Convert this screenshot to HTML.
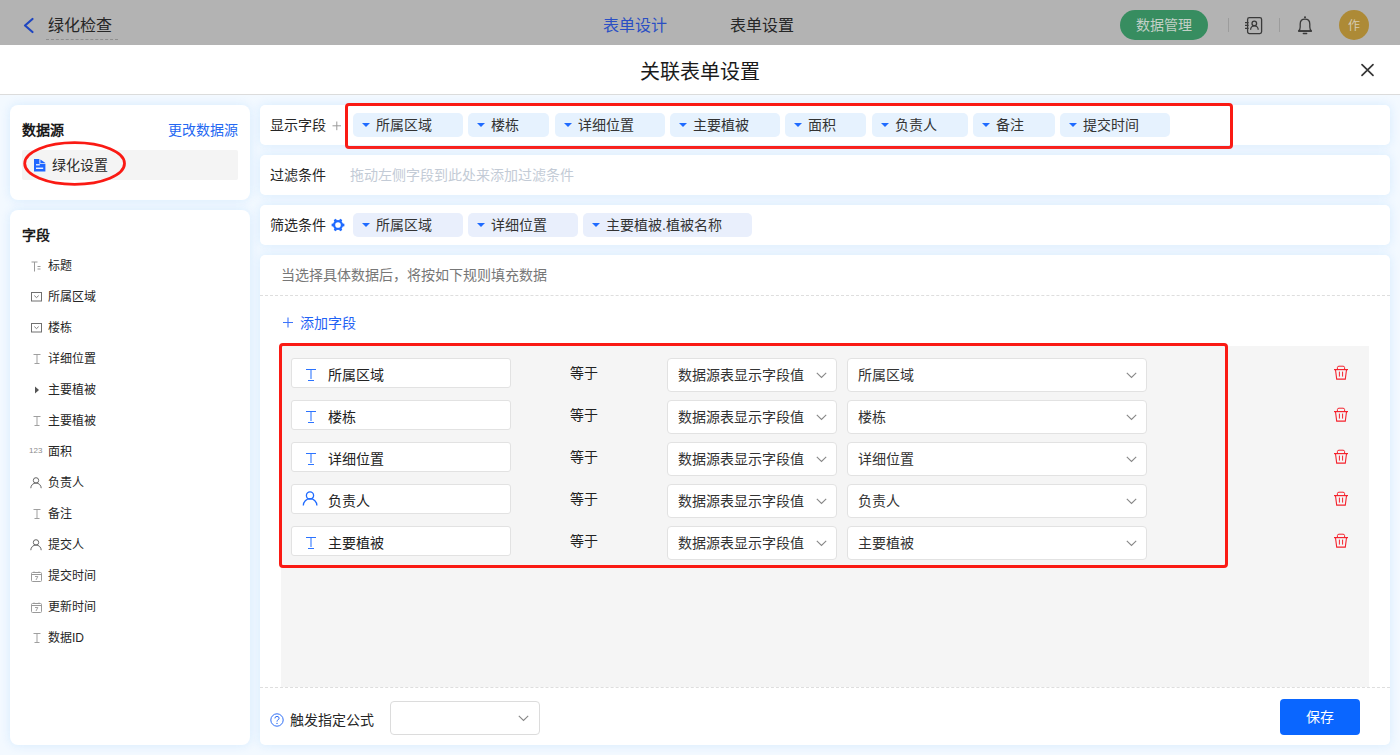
<!DOCTYPE html>
<html lang="zh-CN"><head><meta charset="utf-8">
<style>
*{box-sizing:border-box;margin:0;padding:0}
body{text-spacing-trim:space-all;}
html,body{width:1400px;height:755px;overflow:hidden;background:#f3f9ff;font-family:"Liberation Sans",sans-serif;color:#222;font-size:14px}
.abs{position:absolute}
#hdr{position:absolute;left:0;top:0;width:1400px;height:45px;background:#b3b3b3}
#mt{position:absolute;left:0;top:45px;width:1400px;height:50px;background:#fff;border-bottom:1px solid #dcdcdc}
.card{position:absolute;background:#fff;box-shadow:0 0 9px 1px rgba(210,233,253,.75)}
.lp{border-radius:8px}
.rc{border-radius:5px}
.t{position:absolute;white-space:nowrap;line-height:1}
.tag{position:absolute;height:24px;top:8px;background:#e6f2fe;border-radius:5px}
.tag i{position:absolute;left:9px;top:10px;width:0;height:0;border-left:4px solid transparent;border-right:4px solid transparent;border-top:4px solid #1f6bff}
.tag span{position:absolute;left:23px;top:5px;line-height:14px;font-size:14px;color:#333;white-space:nowrap}
.tag2{background:#e9effc}
.fi{position:absolute;left:22px;font-size:12px;color:#333;line-height:12px}
.fi b{position:absolute;left:9px;top:0;font-weight:normal}
.inp{position:absolute;left:291px;width:220px;height:30px;background:#fff;border:1px solid #e2e2e2;border-radius:3px}
.sel1{position:absolute;left:667px;width:170px;height:34px;background:#fff;border:1px solid #e2e2e2;border-radius:4px}
.sel2{position:absolute;left:847px;width:300px;height:34px;background:#fff;border:1px solid #e2e2e2;border-radius:4px}
.fl{left:48px;font-size:12px;color:#262626}
.rt{font-size:14px;color:#222}
.st{position:absolute;left:10px;top:9px;font-size:14px;line-height:14px;color:#333;white-space:nowrap}
.chev{position:absolute;right:9px;top:13px}
.eq{position:absolute;left:570px;font-size:14px;line-height:14px;color:#222}
</style></head><body>
<!-- header -->
<div id="hdr">
  <svg class="abs" style="left:22px;top:17px" width="13" height="17" viewBox="0 0 13 17"><path d="M10.5 2 L3 8.5 L10.5 15" fill="none" stroke="#1f46c0" stroke-width="2.2" stroke-linecap="round" stroke-linejoin="round"/></svg>
  <div class="t" style="left:48px;top:18px;font-size:16px;color:#262626">绿化检查</div>
  <div class="abs" style="left:46px;top:39px;width:72px;border-top:1px dashed #8f8f8f"></div>
  <div class="t" style="left:603px;top:18px;font-size:16px;color:#2a4fc4">表单设计</div>
  <div class="t" style="left:730px;top:18px;font-size:16px;color:#262626">表单设置</div>
  <div class="abs" style="left:1120px;top:10px;width:88px;height:30px;border-radius:15px;background:#378d60"></div>
  <div class="t" style="left:1136px;top:18px;font-size:14px;color:#c3d0c7">数据管理</div>
  <div class="abs" style="left:1228px;top:18px;width:1px;height:14px;background:#9c9c9c"></div>
  <div class="abs" style="left:1279px;top:18px;width:1px;height:14px;background:#9c9c9c"></div>
  <svg class="abs" style="left:1243px;top:15px" width="22" height="21" viewBox="0 0 22 21"><rect x="4.6" y="2.6" width="14" height="16" rx="1.8" fill="none" stroke="#3a3a3a" stroke-width="1.3"/><path d="M2 7.6 H5.6 M2 10.4 H5.6 M2 13.3 H5.6" stroke="#3a3a3a" stroke-width="1.2"/><circle cx="11.3" cy="8.4" r="2.3" fill="none" stroke="#3a3a3a" stroke-width="1.3"/><path d="M7.6 14.7 A3.8 3.8 0 0 1 15.2 14.7" fill="none" stroke="#3a3a3a" stroke-width="1.3"/></svg>
  <svg class="abs" style="left:1296px;top:15px" width="18" height="20" viewBox="0 0 18 20"><circle cx="9" cy="2.2" r="1" fill="#3a3a3a"/><path d="M2.6 16 Q4.2 14.6 4.2 12 V9 Q4.2 4.1 9 4.1 Q13.8 4.1 13.8 9 V12 Q13.8 14.6 15.4 16 Z" fill="none" stroke="#3a3a3a" stroke-width="1.3" stroke-linejoin="round"/><path d="M2.4 16.1 H15.6" stroke="#3a3a3a" stroke-width="1.5"/><path d="M7.3 18.5 H10.7" stroke="#3a3a3a" stroke-width="1.3" stroke-linecap="round"/></svg>
  <div class="abs" style="left:1339px;top:10px;width:30px;height:30px;border-radius:15px;background:#ad8a36"></div>
  <div class="t" style="left:1348px;top:20px;font-size:12px;color:#d6ccb2">作</div>
</div>
<!-- modal title -->
<div id="mt">
  <div class="t" style="left:640px;top:17px;font-size:20px;color:#1a1a1a">关联表单设置</div>
  <svg class="abs" style="left:1360px;top:18px" width="15" height="14" viewBox="0 0 15 14"><path d="M2 1.6 L13 12.4 M13 1.6 L2 12.4" stroke="#363636" stroke-width="1.7" stroke-linecap="round"/></svg>
</div>

<!-- left panel 1 -->
<div class="card lp" style="left:10px;top:105px;width:240px;height:95px">
  <div class="t" style="left:12px;top:18px;font-size:14px;font-weight:bold;color:#1a1a1a">数据源</div>
  <div class="t" style="left:158px;top:18px;font-size:14px;color:#2468f2">更改数据源</div>
  <div class="abs" style="left:12px;top:45px;width:216px;height:30px;background:#f4f4f4;border-radius:2px"></div>
  <svg class="abs" style="left:23.5px;top:53.5px" width="12" height="13" viewBox="0 0 12 13"><path d="M0 0 H5.4 V4.7 H11.4 V12.6 H0 Z" fill="#1f66ff"/><path d="M6.4 0.5 L11.4 3.9 H6.4 Z" fill="#1f66ff"/><rect x="2" y="5.2" width="3.8" height="1.2" fill="#fff"/><rect x="2" y="8.6" width="7.2" height="1.3" fill="#fff"/></svg>
  <div class="t" style="left:42px;top:53px;font-size:14px;color:#2b2b2b">绿化设置</div>
</div>
<svg class="abs" style="left:20px;top:138px" width="110" height="50" viewBox="0 0 110 50"><ellipse cx="54.6" cy="25.5" rx="49.9" ry="20.8" fill="none" stroke="#fa1a14" stroke-width="2.8"/></svg>

<!-- left panel 2 -->
<div class="card lp" style="left:10px;top:210px;width:240px;height:535px">
  <div class="t" style="left:12px;top:18px;font-size:14px;font-weight:bold;color:#1a1a1a">字段</div>
</div>
<svg class="abs" style="left:31px;top:261px" width="11" height="11" viewBox="0 0 11 11"><path d="M0.5 1 H6.5 M3.5 1 V10.5 M6.5 5.5 H9.5 M6.5 8 H9.5" stroke="#9a9a9a" stroke-width="1" fill="none"/></svg>
<div class="t fl" style="top:260px">标题</div>
<svg class="abs" style="left:31px;top:292px" width="11" height="10" viewBox="0 0 11 10"><rect x="0.5" y="0.5" width="10" height="8.5" fill="none" stroke="#707070" stroke-width="1"/><path d="M3.3 3.6 L5.5 5.6 L7.7 3.6" fill="none" stroke="#707070" stroke-width="0.9"/></svg>
<div class="t fl" style="top:291px">所属区域</div>
<svg class="abs" style="left:31px;top:323px" width="11" height="10" viewBox="0 0 11 10"><rect x="0.5" y="0.5" width="10" height="8.5" fill="none" stroke="#707070" stroke-width="1"/><path d="M3.3 3.6 L5.5 5.6 L7.7 3.6" fill="none" stroke="#707070" stroke-width="0.9"/></svg>
<div class="t fl" style="top:322px">楼栋</div>
<svg class="abs" style="left:33px;top:354px" width="8" height="10" viewBox="0 0 8 10"><path d="M0.5 0.5 H7.5 M4 0.5 V9.5 M1.5 9.5 H6.5" stroke="#9b9b9b" stroke-width="0.95" fill="none"/></svg>
<div class="t fl" style="top:353px">详细位置</div>
<svg class="abs" style="left:34px;top:386px" width="6" height="8" viewBox="0 0 6 8"><path d="M1 0.5 L5 4 L1 7.5 Z" fill="#555"/></svg>
<div class="t fl" style="top:384px">主要植被</div>
<svg class="abs" style="left:33px;top:416px" width="8" height="10" viewBox="0 0 8 10"><path d="M0.5 0.5 H7.5 M4 0.5 V9.5 M1.5 9.5 H6.5" stroke="#9b9b9b" stroke-width="0.95" fill="none"/></svg>
<div class="t fl" style="top:415px">主要植被</div>
<div class="t" style="left:29px;top:447px;font-size:8px;color:#8c8c8c;letter-spacing:0">123</div>
<div class="t fl" style="top:446px">面积</div>
<svg class="abs" style="left:30px;top:477px" width="12" height="12" viewBox="0 0 12 12"><circle cx="6" cy="3.4" r="2.7" fill="none" stroke="#666" stroke-width="1"/><path d="M0.8 11.2 A5.2 5.2 0 0 1 11.2 11.2" fill="none" stroke="#666" stroke-width="1"/></svg>
<div class="t fl" style="top:477px">负责人</div>
<svg class="abs" style="left:33px;top:509px" width="8" height="10" viewBox="0 0 8 10"><path d="M0.5 0.5 H7.5 M4 0.5 V9.5 M1.5 9.5 H6.5" stroke="#9b9b9b" stroke-width="0.95" fill="none"/></svg>
<div class="t fl" style="top:508px">备注</div>
<svg class="abs" style="left:30px;top:539px" width="12" height="12" viewBox="0 0 12 12"><circle cx="6" cy="3.4" r="2.7" fill="none" stroke="#666" stroke-width="1"/><path d="M0.8 11.2 A5.2 5.2 0 0 1 11.2 11.2" fill="none" stroke="#666" stroke-width="1"/></svg>
<div class="t fl" style="top:539px">提交人</div>
<svg class="abs" style="left:31px;top:571px" width="11" height="11" viewBox="0 0 11 11"><rect x="0.5" y="1.5" width="10" height="9" rx="1" fill="none" stroke="#9a9a9a" stroke-width="1"/><path d="M0.5 3.5 H10.5 M3 0.5 V2 M8 0.5 V2" stroke="#9a9a9a" stroke-width="1"/><path d="M4 5.5 H6.8 L5 9" fill="none" stroke="#8a8a8a" stroke-width="0.8"/></svg>
<div class="t fl" style="top:570px">提交时间</div>
<svg class="abs" style="left:31px;top:602px" width="11" height="11" viewBox="0 0 11 11"><rect x="0.5" y="1.5" width="10" height="9" rx="1" fill="none" stroke="#9a9a9a" stroke-width="1"/><path d="M0.5 3.5 H10.5 M3 0.5 V2 M8 0.5 V2" stroke="#9a9a9a" stroke-width="1"/><path d="M4 5.5 H6.8 L5 9" fill="none" stroke="#8a8a8a" stroke-width="0.8"/></svg>
<div class="t fl" style="top:601px">更新时间</div>
<svg class="abs" style="left:33px;top:633px" width="8" height="10" viewBox="0 0 8 10"><path d="M0.5 0.5 H7.5 M4 0.5 V9.5 M1.5 9.5 H6.5" stroke="#9b9b9b" stroke-width="0.95" fill="none"/></svg>
<div class="t fl" style="top:632px">数据ID</div>

<!-- right cards -->
<div class="card rc" style="left:260px;top:105px;width:1130px;height:40px">
  <div class="t" style="left:10px;top:13px;font-size:14px;color:#262626">显示字段</div>
  <svg class="abs" style="left:72px;top:16px" width="10" height="10" viewBox="0 0 10 10"><path d="M0.5 4.8 H9 M4.8 0.5 V9.2" stroke="#9a9a9a" stroke-width="1"/></svg>
  <div class="tag" style="left:93px;width:110px"><i></i><span>所属区域</span></div>
  <div class="tag" style="left:208px;width:81px"><i></i><span>楼栋</span></div>
  <div class="tag" style="left:295px;width:110px"><i></i><span>详细位置</span></div>
  <div class="tag" style="left:410px;width:110px"><i></i><span>主要植被</span></div>
  <div class="tag" style="left:525px;width:81px"><i></i><span>面积</span></div>
  <div class="tag" style="left:612px;width:96px"><i></i><span>负责人</span></div>
  <div class="tag" style="left:713px;width:82px"><i></i><span>备注</span></div>
  <div class="tag" style="left:800px;width:110px"><i></i><span>提交时间</span></div>
</div>
<div class="abs" style="left:345px;top:103px;width:888px;height:46px;border:3px solid #fa1a14;border-radius:4px"></div>

<div class="card rc" style="left:260px;top:155px;width:1130px;height:40px">
  <div class="t" style="left:10px;top:13px;font-size:14px;color:#262626">过滤条件</div>
  <div class="t" style="left:90px;top:13px;font-size:14px;color:#c3cbd6">拖动左侧字段到此处来添加过滤条件</div>
</div>

<div class="card rc" style="left:260px;top:205px;width:1130px;height:40px">
  <div class="t" style="left:10px;top:13px;font-size:14px;color:#262626">筛选条件</div>
  <svg class="abs" style="left:71px;top:13px" width="14" height="14" viewBox="0 0 14 14"><path fill-rule="evenodd" fill="#1f6bff" d="M11.80 5.59 L13.38 5.74 L13.38 8.26 L11.80 8.41 L11.33 9.50 L10.62 10.45 L11.28 11.89 L9.10 13.15 L8.18 11.86 L7.00 12.00 L5.82 11.86 L4.90 13.15 L2.72 11.89 L3.38 10.45 L2.67 9.50 L2.20 8.41 L0.62 8.26 L0.62 5.74 L2.20 5.59 L2.67 4.50 L3.38 3.55 L2.72 2.11 L4.90 0.85 L5.82 2.14 L7.00 2.00 L8.18 2.14 L9.10 0.85 L11.28 2.11 L10.62 3.55 L11.33 4.50 Z M9.8 7 A2.8 2.8 0 1 0 4.2 7 A2.8 2.8 0 1 0 9.8 7 Z"/></svg>
  <div class="tag tag2" style="left:93px;width:110px"><i></i><span>所属区域</span></div>
  <div class="tag tag2" style="left:208px;width:110px"><i></i><span>详细位置</span></div>
  <div class="tag tag2" style="left:323px;width:169px"><i></i><span>主要植被.植被名称</span></div>
</div>

<!-- main panel -->
<div class="card rc" style="left:260px;top:255px;width:1130px;height:490px">
  <div class="t" style="left:21px;top:13px;font-size:14px;color:#777">当选择具体数据后，将按如下规则填充数据</div>
  <div class="abs" style="left:0;top:40px;width:1130px;border-top:1px dashed #dedede"></div>
  <svg class="abs" style="left:22px;top:62px" width="12" height="12" viewBox="0 0 12 12"><path d="M1 5.5 H11 M6 0.5 V10.5" stroke="#3d74fb" stroke-width="1.1"/></svg>
  <div class="t" style="left:40px;top:61px;font-size:14px;color:#1f62f5">添加字段</div>
  <div class="abs" style="left:21px;top:91px;width:1088px;height:341px;background:#f5f5f5"></div>
  <div class="abs" style="left:0;top:432px;width:1130px;border-top:1px dashed #dedede"></div>
  <div class="t" style="left:30px;top:458px;font-size:14px;color:#262626">触发指定公式</div>
  <svg class="abs" style="left:10px;top:458px" width="14" height="14" viewBox="0 0 14 14"><circle cx="7" cy="7" r="6.2" fill="none" stroke="#2f6ff5" stroke-width="1"/><path d="M4.9 5.4 Q4.9 3.4 7 3.4 Q9.1 3.4 9.1 5.2 Q9.1 6.3 7.9 6.9 Q7 7.3 7 8.6" fill="none" stroke="#2f6ff5" stroke-width="1"/><circle cx="7" cy="10.4" r="0.7" fill="#2f6ff5"/></svg>
  <div class="abs" style="left:130px;top:446px;width:150px;height:34px;border:1px solid #dcdcdc;border-radius:4px;background:#fff"><svg class="chev" style="right:10px;top:13px" width="11" height="7" viewBox="0 0 11 7"><path d="M0.8 0.8 L5.5 5.5 L10.2 0.8" fill="none" stroke="#888" stroke-width="1.1"/></svg></div>
  <div class="abs" style="left:1020px;top:444px;width:80px;height:36px;background:#0a66ff;border-radius:4px"></div>
  <div class="t" style="left:1046px;top:455px;font-size:14px;color:#fff">保存</div>
</div>
<div class="inp" style="top:358px"></div>
<svg class="abs" style="left:305px;top:368px" width="12" height="14" viewBox="0 0 12 14"><path d="M1 1.5 H11 M6 1.5 V11 M3 12.5 H9" stroke="#2b73ff" stroke-width="1.05" fill="none"/></svg>
<div class="t rt" style="left:328px;top:368px">所属区域</div>
<div class="t rt" style="left:570px;top:366px">等于</div>
<div class="sel1" style="top:358px"><span class="st">数据源表显示字段值</span><svg class="chev" width="11" height="7" viewBox="0 0 11 7"><path d="M0.8 0.8 L5.5 5.5 L10.2 0.8" fill="none" stroke="#888" stroke-width="1.1"/></svg></div>
<div class="sel2" style="top:358px"><span class="st">所属区域</span><svg class="chev" width="11" height="7" viewBox="0 0 11 7"><path d="M0.8 0.8 L5.5 5.5 L10.2 0.8" fill="none" stroke="#888" stroke-width="1.1"/></svg></div>
<svg class="abs" style="left:1333px;top:364px" width="16" height="16" viewBox="0 0 16 16"><path d="M4.4 5.4 V3.6 Q4.4 2.2 6 2.2 H10 Q11.6 2.2 11.6 3.6 V5.4" fill="none" stroke="#f5222d" stroke-width="1"/><path d="M1 5.6 H15" stroke="#f5222d" stroke-width="1.2"/><path d="M2.5 5.8 L3.7 15.1 H12.3 L13.5 5.8" fill="none" stroke="#f5222d" stroke-width="1.1"/><path d="M6.4 7.6 V12.6 M9.6 7.6 V12.6" stroke="#f5222d" stroke-width="1"/></svg>
<div class="inp" style="top:400px"></div>
<svg class="abs" style="left:305px;top:410px" width="12" height="14" viewBox="0 0 12 14"><path d="M1 1.5 H11 M6 1.5 V11 M3 12.5 H9" stroke="#2b73ff" stroke-width="1.05" fill="none"/></svg>
<div class="t rt" style="left:328px;top:410px">楼栋</div>
<div class="t rt" style="left:570px;top:408px">等于</div>
<div class="sel1" style="top:400px"><span class="st">数据源表显示字段值</span><svg class="chev" width="11" height="7" viewBox="0 0 11 7"><path d="M0.8 0.8 L5.5 5.5 L10.2 0.8" fill="none" stroke="#888" stroke-width="1.1"/></svg></div>
<div class="sel2" style="top:400px"><span class="st">楼栋</span><svg class="chev" width="11" height="7" viewBox="0 0 11 7"><path d="M0.8 0.8 L5.5 5.5 L10.2 0.8" fill="none" stroke="#888" stroke-width="1.1"/></svg></div>
<svg class="abs" style="left:1333px;top:406px" width="16" height="16" viewBox="0 0 16 16"><path d="M4.4 5.4 V3.6 Q4.4 2.2 6 2.2 H10 Q11.6 2.2 11.6 3.6 V5.4" fill="none" stroke="#f5222d" stroke-width="1"/><path d="M1 5.6 H15" stroke="#f5222d" stroke-width="1.2"/><path d="M2.5 5.8 L3.7 15.1 H12.3 L13.5 5.8" fill="none" stroke="#f5222d" stroke-width="1.1"/><path d="M6.4 7.6 V12.6 M9.6 7.6 V12.6" stroke="#f5222d" stroke-width="1"/></svg>
<div class="inp" style="top:442px"></div>
<svg class="abs" style="left:305px;top:452px" width="12" height="14" viewBox="0 0 12 14"><path d="M1 1.5 H11 M6 1.5 V11 M3 12.5 H9" stroke="#2b73ff" stroke-width="1.05" fill="none"/></svg>
<div class="t rt" style="left:328px;top:452px">详细位置</div>
<div class="t rt" style="left:570px;top:450px">等于</div>
<div class="sel1" style="top:442px"><span class="st">数据源表显示字段值</span><svg class="chev" width="11" height="7" viewBox="0 0 11 7"><path d="M0.8 0.8 L5.5 5.5 L10.2 0.8" fill="none" stroke="#888" stroke-width="1.1"/></svg></div>
<div class="sel2" style="top:442px"><span class="st">详细位置</span><svg class="chev" width="11" height="7" viewBox="0 0 11 7"><path d="M0.8 0.8 L5.5 5.5 L10.2 0.8" fill="none" stroke="#888" stroke-width="1.1"/></svg></div>
<svg class="abs" style="left:1333px;top:448px" width="16" height="16" viewBox="0 0 16 16"><path d="M4.4 5.4 V3.6 Q4.4 2.2 6 2.2 H10 Q11.6 2.2 11.6 3.6 V5.4" fill="none" stroke="#f5222d" stroke-width="1"/><path d="M1 5.6 H15" stroke="#f5222d" stroke-width="1.2"/><path d="M2.5 5.8 L3.7 15.1 H12.3 L13.5 5.8" fill="none" stroke="#f5222d" stroke-width="1.1"/><path d="M6.4 7.6 V12.6 M9.6 7.6 V12.6" stroke="#f5222d" stroke-width="1"/></svg>
<div class="inp" style="top:484px"></div>
<svg class="abs" style="left:302px;top:491px" width="16" height="16" viewBox="0 0 16 16"><circle cx="8" cy="4.4" r="3.6" fill="none" stroke="#1f6bff" stroke-width="1.3"/><path d="M1.3 14.5 A6.8 6.8 0 0 1 14.9 14.5" fill="none" stroke="#1f6bff" stroke-width="1.3"/></svg>
<div class="t rt" style="left:328px;top:494px">负责人</div>
<div class="t rt" style="left:570px;top:492px">等于</div>
<div class="sel1" style="top:484px"><span class="st">数据源表显示字段值</span><svg class="chev" width="11" height="7" viewBox="0 0 11 7"><path d="M0.8 0.8 L5.5 5.5 L10.2 0.8" fill="none" stroke="#888" stroke-width="1.1"/></svg></div>
<div class="sel2" style="top:484px"><span class="st">负责人</span><svg class="chev" width="11" height="7" viewBox="0 0 11 7"><path d="M0.8 0.8 L5.5 5.5 L10.2 0.8" fill="none" stroke="#888" stroke-width="1.1"/></svg></div>
<svg class="abs" style="left:1333px;top:490px" width="16" height="16" viewBox="0 0 16 16"><path d="M4.4 5.4 V3.6 Q4.4 2.2 6 2.2 H10 Q11.6 2.2 11.6 3.6 V5.4" fill="none" stroke="#f5222d" stroke-width="1"/><path d="M1 5.6 H15" stroke="#f5222d" stroke-width="1.2"/><path d="M2.5 5.8 L3.7 15.1 H12.3 L13.5 5.8" fill="none" stroke="#f5222d" stroke-width="1.1"/><path d="M6.4 7.6 V12.6 M9.6 7.6 V12.6" stroke="#f5222d" stroke-width="1"/></svg>
<div class="inp" style="top:526px"></div>
<svg class="abs" style="left:305px;top:536px" width="12" height="14" viewBox="0 0 12 14"><path d="M1 1.5 H11 M6 1.5 V11 M3 12.5 H9" stroke="#2b73ff" stroke-width="1.05" fill="none"/></svg>
<div class="t rt" style="left:328px;top:536px">主要植被</div>
<div class="t rt" style="left:570px;top:534px">等于</div>
<div class="sel1" style="top:526px"><span class="st">数据源表显示字段值</span><svg class="chev" width="11" height="7" viewBox="0 0 11 7"><path d="M0.8 0.8 L5.5 5.5 L10.2 0.8" fill="none" stroke="#888" stroke-width="1.1"/></svg></div>
<div class="sel2" style="top:526px"><span class="st">主要植被</span><svg class="chev" width="11" height="7" viewBox="0 0 11 7"><path d="M0.8 0.8 L5.5 5.5 L10.2 0.8" fill="none" stroke="#888" stroke-width="1.1"/></svg></div>
<svg class="abs" style="left:1333px;top:532px" width="16" height="16" viewBox="0 0 16 16"><path d="M4.4 5.4 V3.6 Q4.4 2.2 6 2.2 H10 Q11.6 2.2 11.6 3.6 V5.4" fill="none" stroke="#f5222d" stroke-width="1"/><path d="M1 5.6 H15" stroke="#f5222d" stroke-width="1.2"/><path d="M2.5 5.8 L3.7 15.1 H12.3 L13.5 5.8" fill="none" stroke="#f5222d" stroke-width="1.1"/><path d="M6.4 7.6 V12.6 M9.6 7.6 V12.6" stroke="#f5222d" stroke-width="1"/></svg>
<div class="abs" style="left:279px;top:343px;width:949px;height:225px;border:3px solid #fa1a14;border-radius:4px"></div>
</body></html>
